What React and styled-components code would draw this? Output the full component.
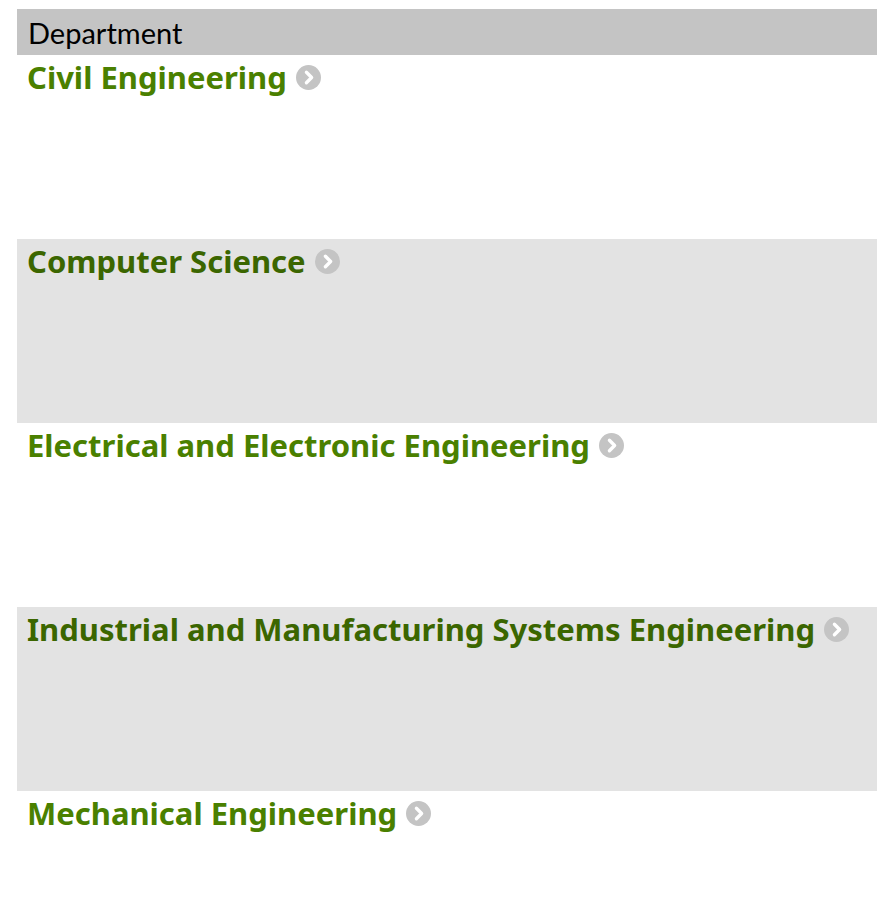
import React from "react";
import styled, { createGlobalStyle } from "styled-components";

const departments = [
  "Civil Engineering",
  "Computer Science",
  "Electrical and Electronic Engineering",
  "Industrial and Manufacturing Systems Engineering",
  "Mechanical Engineering",
];

function ChevronIcon() {
  return (
    <Icon viewBox="0 0 24 24" aria-hidden="true">
      <circle cx="12" cy="12" r="12" fill="#c4c4c4" />
      <path
        d="M10 7l5 5-5 5"
        fill="none"
        stroke="#fff"
        strokeWidth="3.2"
        strokeLinecap="round"
        strokeLinejoin="round"
      />
    </Icon>
  );
}

function App() {
  return (
    <>
      <GlobalStyle />
      <Page>
        <Table>
          <HeaderRow>
            <HeaderCell>Department</HeaderCell>
          </HeaderRow>
          {departments.map((name, i) => (
            <Row key={name} $shaded={i % 2 === 1}>
              <DeptLink href="#" $shaded={i % 2 === 1}>
                {name}
                <ChevronIcon />
              </DeptLink>
            </Row>
          ))}
        </Table>
      </Page>
    </>
  );
}

export default App;

const GlobalStyle = createGlobalStyle`
  body {
    margin: 0;
    background: #fff;
    font-family: "Noto Sans", sans-serif;
  }
`;

const Page = styled.div`
  padding: 9px 0 0 17px;
`;

const Table = styled.div`
  display: flex;
  flex-direction: column;
`;

const HeaderRow = styled.div`
  height: 46px;
  background: #c4c4c4;
  display: flex;
  align-items: center;
  padding: 0 11px;
`;

const HeaderCell = styled.div`
  font-family: Lato, sans-serif;
  font-size: 29px;
  color: #000;
`;

const Row = styled.div`
  height: 184px;
  box-sizing: border-box;
  padding: 1px 10px 0;
  background: ${(p) => (p.$shaded ? "#e3e3e3" : "#fff")};
`;

const DeptLink = styled.a`
  display: inline-flex;
  align-items: center;
  gap: 9px;
  font-family: "Noto Sans", sans-serif;
  font-weight: 700;
  font-size: 31px;
  color: ${(p) => (p.$shaded ? "#3b6600" : "#4a8000")};
  text-decoration: none;
`;

const Icon = styled.svg`
  width: 25px;
  height: 25px;
  flex: none;
`;
